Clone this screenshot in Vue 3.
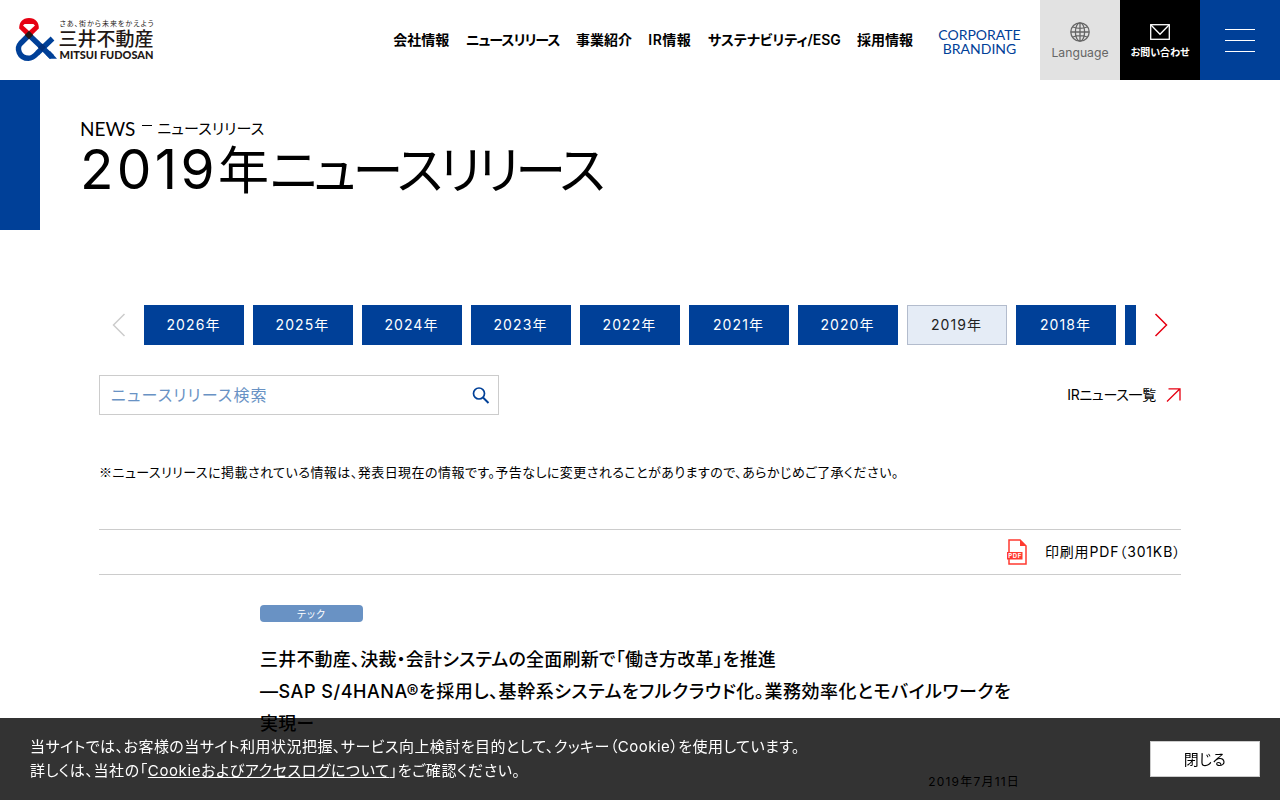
<script setup>
const nav = [
  { label: '会社情報', cls: 'kanji' },
  { label: 'ニュースリリース', cls: 'news' },
  { label: '事業紹介', cls: 'kanji' },
  { label: 'IR情報', cls: 'ir' },
  { label: 'サステナビリティ/ESG', cls: 'esg' },
  { label: '採用情報', cls: 'kanji' }
];

const current = 2019;
const years = [2026, 2025, 2024, 2023, 2022, 2021, 2020, 2019, 2018, 2017];
</script>

<template>
  <div class="page">
    <header class="header">
      <a class="logo">
        <svg width="160" height="80" viewBox="0 0 160 80">
          <g fill="none" stroke-width="5.4">
            <path d="M29 35 L20.5 43.5 C16.2 48 19 58.3 28.5 58.3 C33 58.3 35.5 55 38 52.5 L52.5 38.5" stroke="#004098" />
            <path d="M29 35 L52 57" stroke="#004098" />
          </g>
          <path d="M45.5 54.5 L50 51 L57 58.7 H49.5 Z" fill="#004098" />
          <path d="M29 38 L19.2 28.5 C19 22.5 22.5 18 29 18 C35.5 18 39 22.5 38.8 28.5 Z" fill="#e60012" />
          <path d="M29 30.8 L33.2 35 L29 39.2 L24.8 35 Z" fill="#231815" />
          <path d="M42 43.5 L46 47.3 L42 51.2 L38 47.3 Z" fill="#002f7a" />
          <path d="M24.6 24 H33.4 L35 25.4 L29 31 L23 25.4 Z" fill="#fff" />
          <text class="tagline" x="59.5" y="25.6" textLength="94">さあ、街から未来をかえよう</text>
          <text class="name" x="58.5" y="46.4" textLength="95">三井不動産</text>
          <text class="roman" x="59.5" y="59" textLength="94" lengthAdjust="spacingAndGlyphs">MITSUI FUDOSAN</text>
        </svg>
      </a>
      <nav class="nav">
        <a v-for="item in nav" :key="item.label" :class="item.cls">{{ item.label }}</a>
      </nav>
      <a class="branding"><span>CORPORATE</span><span>BRANDING</span></a>
      <a class="tile language">
        <svg width="20" height="20" viewBox="0 0 20 20" fill="none" stroke="#666" stroke-width="1.3">
          <circle cx="10" cy="10" r="9.2" />
          <ellipse cx="10" cy="10" rx="4.6" ry="9.2" />
          <path d="M10 1V19M1 10H19M2.8 5Q10 7.6 17.2 5M2.8 15Q10 12.4 17.2 15" />
        </svg>
        <span>Language</span>
      </a>
      <a class="tile contact">
        <svg width="20" height="16" viewBox="0 0 20 16" fill="none" stroke="#fff" stroke-width="1.3">
          <rect x="0.7" y="0.7" width="18.6" height="14.6" />
          <path d="M1 1L10 10.3L19 1" />
        </svg>
        <span>お問い合わせ</span>
      </a>
      <a class="tile menu"><i></i><i></i><i></i></a>
    </header>

    <div class="hero">
      <div class="bar"></div>
      <div class="titles">
        <p class="crumb"><span class="en">NEWS</span><i></i><span class="ja">ニュースリリース</span></p>
        <h1><span class="num">2019</span>年<span class="kana">ニュースリリース</span></h1>
      </div>
    </div>

    <main class="main">
      <div class="years">
        <svg class="arrow" width="14" height="24" viewBox="0 0 14 24" fill="none" stroke="#ccc" stroke-width="1.5">
          <path d="M12.5 1L1.5 12L12.5 23" />
        </svg>
        <div class="track">
          <a v-for="year in years" :key="year" :class="['year', { current: year === current }]">{{ year }}年</a>
        </div>
        <svg class="arrow" width="14" height="24" viewBox="0 0 14 24" fill="none" stroke="#e60012" stroke-width="1.5">
          <path d="M1.5 1L12.5 12L1.5 23" />
        </svg>
      </div>

      <div class="tools">
        <div class="search">
          <span>ニュースリリース検索</span>
          <svg width="18" height="18" viewBox="0 0 18 18" fill="none" stroke="#004098" stroke-width="1.7">
            <circle cx="7" cy="7.5" r="5.5" />
            <path d="M11 11.5L16.5 17" stroke-width="2" />
          </svg>
        </div>
        <a class="ir-link">
          <span>IRニュース一覧</span>
          <svg width="15" height="14" viewBox="0 0 15 14" fill="none" stroke="#e60012" stroke-width="1.3">
            <path d="M2.5 0.8H14V12.5M14 0.8L1 13.5" />
          </svg>
        </a>
      </div>

      <p class="note">※ニュースリリースに掲載されている情報は、発表日現在の情報です。予告なしに変更されることがありますので、あらかじめご了承ください。</p>

      <div class="pdf">
        <svg width="20" height="26" viewBox="0 0 20 26">
          <path d="M2 15V1H13L19 7V25H2V20" fill="none" stroke="#ff3a30" stroke-width="1.5" />
          <path d="M13 0.5V7H19.5Z" fill="#ff3a30" />
          <rect x="0" y="13" width="15.5" height="7.5" fill="#ff3a30" />
          <text x="1.2" y="19.2" textLength="13">PDF</text>
        </svg>
        <span>印刷用PDF（301KB）</span>
      </div>

      <article class="article">
        <span class="tag">テック</span>
        <h2>
          <span class="l1">三井不動産、決裁・会計システムの全面刷新で「働き方改革」を推進</span>
          <span class="l2">―SAP S/4HANA®を採用し、基幹系システムをフルクラウド化。業務効率化とモバイルワークを</span>
          <span class="l3">実現ー</span>
        </h2>
        <p class="date">2019年7月11日</p>
      </article>
    </main>

    <div class="cookie">
      <div class="message">
        <p class="m1">当サイトでは、お客様の当サイト利用状況把握、サービス向上検討を目的として、クッキー（Cookie）を使用しています。</p>
        <p class="m2">詳しくは、当社の「<a>Cookieおよびアクセスログについて</a>」をご確認ください。</p>
      </div>
      <button>閉じる</button>
    </div>
  </div>
</template>

<style>
  body {
    margin: 0;
    overflow: hidden;
  }
</style>

<style scoped>
  .page {
    height: 800px;
    overflow: hidden;
    background-color: white;
    color: black;
    font-family: Inter, "Noto Sans CJK JP", sans-serif;
    font-feature-settings: "palt";
    white-space: nowrap;
  }

  p, h1, h2 {
    margin: 0;
  }

  svg {
    display: block;
    flex-shrink: 0;
  }

  .header {
    display: flex;
    height: 80px;
  }

  .logo text {
    fill: #231815;
  }

  .logo .tagline {
    font-size: 7px;
    font-weight: 400;
  }

  .logo .name {
    font-size: 19px;
    font-weight: 500;
  }

  .logo .roman {
    font-family: Lato, sans-serif;
    font-size: 10.5px;
    font-weight: 900;
  }

  .nav {
    margin: 0 1px 2px auto;
    display: flex;
    gap: 16.4px;
    align-items: center;
    font-size: 14px;
    font-weight: 600;
  }

  .nav .news {
    letter-spacing: -1px;
  }

  .nav .ir {
    letter-spacing: 0.5px;
  }

  .nav .esg {
    letter-spacing: -0.08px;
  }

  .branding {
    width: 83px;
    margin: 4px 19px 0 24px;
    display: flex;
    flex-direction: column;
    justify-content: center;
    align-items: center;
    font-family: Lato, sans-serif;
    font-size: 14px;
    line-height: 14px;
    color: #004098;
  }

  .tile {
    width: 80px;
    display: flex;
    flex-direction: column;
    align-items: center;
    box-sizing: border-box;
  }

  .language {
    background-color: #e2e2e2;
    color: #666;
    padding-top: 22px;
    font-size: 12.2px;
    line-height: 22px;
  }

  .contact {
    background-color: black;
    color: white;
    padding-top: 24px;
    font-size: 10px;
    font-weight: 700;
    line-height: 24px;
  }

  .menu {
    background-color: #004098;
    padding-top: 29px;
    gap: 10px;
  }

  .menu i {
    width: 30px;
    height: 1px;
    background-color: white;
  }

  .hero {
    display: flex;
    height: 150px;
  }

  .bar {
    width: 40px;
    background-color: #004098;
  }

  .titles {
    padding: 38px 0 0 40px;
  }

  .crumb {
    display: flex;
    height: 22px;
    line-height: 22px;
  }

  .crumb .en {
    font-family: Lato, sans-serif;
    font-size: 19px;
  }

  .crumb i {
    width: 10px;
    height: 1px;
    margin: 7px 5px 0 7px;
    background-color: black;
  }

  .crumb .ja {
    font-size: 15px;
    letter-spacing: 0.1px;
  }

  h1 {
    font-size: 51px;
    font-weight: 400;
    line-height: 58px;
  }

  .num {
    font-size: 55px;
    letter-spacing: 3.3px;
  }

  .kana {
    margin-left: 1px;
    letter-spacing: -3.6px;
  }

  .main {
    width: 1082px;
    margin: 75px auto 0;
  }

  .years {
    display: flex;
    align-items: center;
    justify-content: space-between;
    padding: 0 13px;
  }

  .track {
    width: 992px;
    display: flex;
    gap: 9px;
    overflow: hidden;
  }

  .year {
    flex: 0 0 100px;
    height: 40px;
    line-height: 38px;
    box-sizing: border-box;
    border: 1px solid #004098;
    padding-right: 1px;
    background-color: #004098;
    color: white;
    text-align: center;
    font-size: 14px;
    letter-spacing: 1.1px;
  }

  .current {
    border-color: #b3bccd;
    background-color: #e5ecf6;
    color: #222;
  }

  .tools {
    margin-top: 30px;
    display: flex;
    justify-content: space-between;
    align-items: center;
  }

  .tools span, .pdf span {
    padding-bottom: 2px;
  }

  .search {
    width: 400px;
    height: 40px;
    box-sizing: border-box;
    border: 1px solid #ccc;
    padding: 0 8px 0 11px;
    display: flex;
    justify-content: space-between;
    align-items: center;
    font-size: 16px;
    letter-spacing: 1.15px;
    color: #6992c4;
  }

  .ir-link {
    display: flex;
    align-items: center;
    gap: 10px;
    font-size: 14px;
    letter-spacing: -0.3px;
  }

  .note {
    margin-top: 46px;
    font-family: "Noto Sans CJK JP", sans-serif;
    font-size: 13px;
    line-height: 22px;
    letter-spacing: 0.46px;
  }

  .pdf {
    margin-top: 46px;
    height: 44px;
    border-top: 1px solid #ccc;
    border-bottom: 1px solid #ccc;
    display: flex;
    justify-content: flex-end;
    align-items: center;
    gap: 18px;
    font-size: 14px;
    letter-spacing: 0.85px;
  }

  .pdf text {
    font-size: 6px;
    font-weight: 700;
    letter-spacing: 0;
    fill: white;
  }

  .article {
    width: 760px;
    margin: 30px auto 0;
  }

  .tag {
    display: block;
    width: 103px;
    height: 17px;
    line-height: 19px;
    border-radius: 4px;
    background-color: #6992c4;
    color: white;
    text-align: center;
    font-size: 10px;
    letter-spacing: 1px;
  }

  h2 {
    margin-top: 22px;
    font-size: 18px;
    font-weight: 500;
    line-height: 32px;
  }

  h2 span {
    display: block;
    letter-spacing: 0.2px;
  }

  h2 .l2 {
    letter-spacing: 0.54px;
  }

  .date {
    margin-top: 32px;
    text-align: right;
    font-size: 12px;
    line-height: 20px;
    letter-spacing: 1.2px;
  }

  .cookie {
    position: fixed;
    left: 0;
    right: 0;
    bottom: 0;
    height: 82px;
    box-sizing: border-box;
    padding: 0 20px 0 30px;
    display: flex;
    justify-content: space-between;
    align-items: center;
    background-color: rgba(0, 0, 0, 0.8);
    color: white;
  }

  .message {
    font-size: 15px;
    line-height: 24px;
    letter-spacing: 0.47px;
  }

  .m2 {
    letter-spacing: 0.6px;
  }

  .message a {
    text-decoration: underline;
  }

  button {
    width: 110px;
    height: 36px;
    padding: 0 0 2px;
    border: 1px solid #ccc;
    background-color: white;
    color: black;
    font-family: inherit;
    font-feature-settings: inherit;
    font-size: 15px;
    letter-spacing: 0.3px;
  }
</style>
